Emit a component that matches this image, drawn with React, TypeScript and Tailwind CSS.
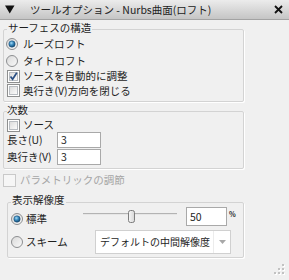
import React from 'react';

const Radio = ({ checked = false }: { checked?: boolean }) => (
  <svg width="12" height="12" viewBox="0 0 12 12" className="shrink-0">
    <defs>
      <linearGradient id="rbg" x1="0" y1="0" x2="1" y2="1">
        <stop offset="0" stopColor="#d8d8d8" />
        <stop offset="1" stopColor="#fafafa" />
      </linearGradient>
      <radialGradient id="rdot" cx="0.4" cy="0.35" r="0.7">
        <stop offset="0" stopColor="#a8dcf5" />
        <stop offset="0.45" stopColor="#3b8cc0" />
        <stop offset="1" stopColor="#0c3f66" />
      </radialGradient>
    </defs>
    <circle cx="6" cy="6" r="5.5" fill="url(#rbg)" stroke="#8c8e90" strokeWidth="1" />
    {checked && <circle cx="6" cy="6" r="3.2" fill="url(#rdot)" stroke="#1d4d74" strokeWidth="0.5" />}
  </svg>
);

const Checkbox = ({ checked = false, disabled = false }: { checked?: boolean; disabled?: boolean }) => (
  <div
    className={
      disabled
        ? 'w-[13px] h-[13px] shrink-0 border border-[#c9c9c9] bg-[#f6f6f6]'
        : 'w-[13px] h-[13px] shrink-0 border border-[#8e8f8f] bg-white p-[1px]'
    }
  >
    {!disabled && (
      <div className="relative w-full h-full border border-[#b8bcc1] bg-gradient-to-br from-[#dcdcdc] to-[#fbfbfb]">
        {checked && (
          <svg width="11" height="11" viewBox="0 0 11 11" className="absolute -left-[2px] -top-[2px]">
            <path d="M2.5 5.5 L4.6 8.3 L8.8 1.8" fill="none" stroke="#2a4f84" strokeWidth="1.7" />
          </svg>
        )}
      </div>
    )}
  </div>
);

const Slider = () => (
  <svg width="94" height="20" viewBox="0 0 94 20" className="shrink-0">
    <defs>
      <linearGradient id="thumb" x1="0" y1="0" x2="1" y2="0">
        <stop offset="0" stopColor="#f7f7f7" />
        <stop offset="1" stopColor="#d6d6d6" />
      </linearGradient>
    </defs>
    <line x1="0" y1="6.5" x2="94" y2="6.5" stroke="#b3b3b3" strokeWidth="1" />
    <line x1="0" y1="7.5" x2="94" y2="7.5" stroke="#e6e6e6" strokeWidth="1" />
    <rect x="45.5" y="3.5" width="6" height="12" rx="2" fill="url(#thumb)" stroke="#7d7d7d" strokeWidth="1" />
  </svg>
);

export default function App() {
  return (
    <div
      className="relative w-[289px] h-[280px] overflow-hidden bg-[#f0f0f0] text-[#1e1e1e] text-[10.5px] leading-[12px]"
      style={{ fontFamily: '"Noto Sans CJK JP", "Noto Sans", sans-serif' }}
    >
      {/* title bar */}
      <div className="h-[20px] flex items-center border-b border-[#a3a3a3] bg-gradient-to-b from-[#ececec] to-[#c5c5c5]">
        <svg width="10" height="9" viewBox="0 0 10 9" className="ml-[5px]">
          <polygon points="0,0.5 9.5,0.5 4.75,8.5" fill="#111" />
        </svg>
        <span className="ml-[15px] text-[#222]">ツールオプション - Nurbs曲面(ロフト)</span>
        <svg width="9" height="9" viewBox="0 0 9 9" className="ml-auto mr-[6px]">
          <path d="M1 1 L8 8 M8 1 L1 8" stroke="#111" strokeWidth="1.8" />
        </svg>
      </div>

      {/* サーフェスの構造 */}
      <fieldset className="ml-[3px] mt-[2px] w-[241px] border border-[#d3d3d3] rounded-[2px] shadow-[1px_1px_0_#ffffff] pl-[3px] pb-[2px]">
        <legend className="px-[1px] pb-[2px]">サーフェスの構造</legend>
        <div className="h-[15px] flex items-center">
          <div className="-ml-[1px]"><Radio checked /></div>
          <span className="ml-[5px]">ルーズロフト</span>
        </div>
        <div className="h-[19px] flex items-center">
          <div className="-ml-[1px]"><Radio /></div>
          <span className="ml-[5px]">タイトロフト</span>
        </div>
        <div className="h-[12px] flex items-center">
          <Checkbox checked />
          <span className="ml-[3px]">ソースを自動的に調整</span>
        </div>
        <div className="h-[17px] flex items-center">
          <Checkbox />
          <span className="ml-[3px]">奥行き(V)方向を閉じる</span>
        </div>
      </fieldset>

      {/* 次数 */}
      <fieldset className="ml-[3px] mt-[2px] w-[241px] border border-[#d3d3d3] rounded-[2px] shadow-[1px_1px_0_#ffffff] pl-[3px] pb-[3px]">
        <legend className="pb-[2px]">次数</legend>
        <div className="h-[14px] flex items-center">
          <Checkbox />
          <span className="ml-[3px]">ソース</span>
        </div>
        <div className="h-[16px] flex items-center">
          <span className="w-[50px]">長さ(U)</span>
          <div className="w-[44px] h-[16px] border border-[#a9a9a9] bg-white pl-[3px] flex items-center">3</div>
        </div>
        <div className="mt-[1px] h-[16px] flex items-center">
          <span className="w-[50px]">奥行き(V)</span>
          <div className="w-[44px] h-[16px] border border-[#a9a9a9] bg-white pl-[3px] flex items-center">3</div>
        </div>
      </fieldset>

      {/* パラメトリックの調節 */}
      <div className="ml-[3px] mt-[3px] h-[16px] flex items-center text-[#a6a6a6]">
        <Checkbox disabled />
        <span className="ml-[4px]">パラメトリックの調節</span>
      </div>

      {/* 表示解像度 */}
      <fieldset className="ml-[7px] mt-[7px] w-[237px] border border-[#d3d3d3] rounded-[2px] shadow-[1px_1px_0_#ffffff] pl-[3px] pb-[3px]">
        <legend className="px-[1px] pb-[4px] leading-[10px]">表示解像度</legend>
        <div className="-mt-[2px] h-[20px] flex items-start">
          <div className="w-[72px] h-[20px] flex items-center pt-[4px]">
            <Radio checked />
            <span className="ml-[3px]">標準</span>
          </div>
          <Slider />
          <div className="ml-[9px] w-[41px] h-[19px] border border-[#a9a9a9] bg-white pl-[3px] flex items-center">50</div>
          <span className="ml-[2px] mt-[3px] text-[7px] leading-[8px] font-bold">%</span>
        </div>
        <div className="mt-[3px] h-[24px] flex items-center">
          <div className="w-[84px] flex items-center">
            <Radio />
            <span className="ml-[3px]">スキーム</span>
          </div>
          <div className="w-[136px] h-[24px] border border-[#d0d0d0] bg-white flex items-center">
            <span className="flex-1 pl-[4px] text-[10px] whitespace-nowrap">デフォルトの中間解像度</span>
            <div className="w-[17px] h-full shrink-0 border-l border-[#ececec] flex items-center justify-center">
              <svg width="7" height="4" viewBox="0 0 7 4">
                <polygon points="0,0 7,0 3.5,4" fill="#a8a8a8" />
              </svg>
            </div>
          </div>
        </div>
      </fieldset>

      {/* resize grip */}
      <svg width="12" height="12" viewBox="0 0 12 12" className="absolute right-[4px] bottom-[5px]">
        {[
          [9, 1],
          [9, 5],
          [5, 5],
          [9, 9],
          [5, 9],
          [1, 9],
        ].map(([x, y]) => (
          <g key={`${x}-${y}`}>
            <rect x={x + 1} y={y + 1} width="2" height="2" fill="#ffffff" />
            <rect x={x} y={y} width="2" height="2" fill="#c2c2c2" />
          </g>
        ))}
      </svg>
    </div>
  );
}
